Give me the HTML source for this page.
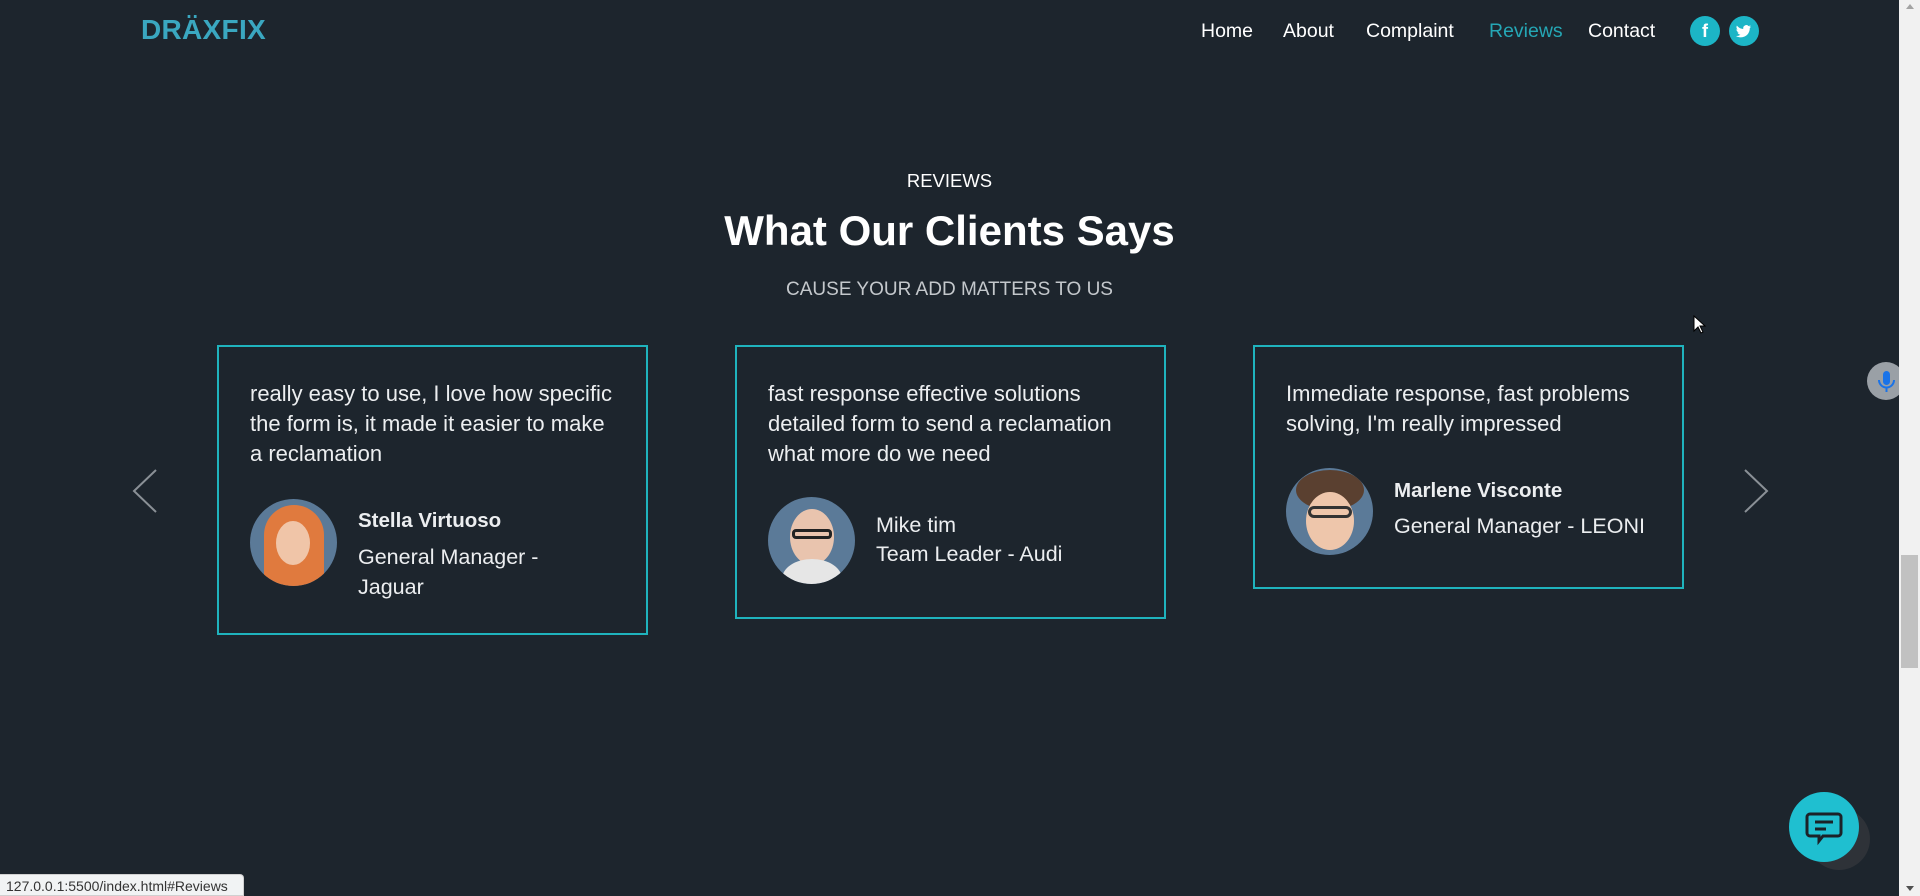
<!DOCTYPE html>
<html><head><meta charset="utf-8"><style>
*{margin:0;padding:0;box-sizing:border-box}
body{width:1920px;height:896px;overflow:hidden;background:#1d252d;font-family:"Liberation Sans",sans-serif;color:#fff;position:relative}
.a{position:absolute;white-space:nowrap}
.nav{top:20px;font-size:19.5px;color:#fff}
.card{position:absolute;top:345px;width:431px;border:2px solid #1fb3bd}
.q{position:absolute;left:31px;font-size:22px;line-height:30px;color:#eceef0}
.av{position:absolute;width:87px;height:87px;border-radius:50%;background:#5b7a98;overflow:hidden}
.nm{position:absolute;font-size:20.5px;font-weight:bold;color:#eceef0}
.rl{position:absolute;font-size:21.5px;line-height:30px;color:#eceef0}
</style></head><body>
<div class="a" style="left:141px;top:14px;font-size:28px;font-weight:bold;color:#3aa7c0;letter-spacing:0.3px">DRÄXFIX</div>
<div class="a nav" style="left:1201px">Home</div>
<div class="a nav" style="left:1283px">About</div>
<div class="a nav" style="left:1366px">Complaint</div>
<div class="a nav" style="left:1489px;color:#25a7b5">Reviews</div>
<div class="a nav" style="left:1588px">Contact</div>
<div class="a" style="left:1690px;top:16px;width:30px;height:30px;border-radius:50%;background:#1cb5c6;color:#fff;font-weight:bold;font-size:18px;text-align:center;line-height:31px">f</div>
<div class="a" style="left:1729px;top:16px;width:30px;height:30px;border-radius:50%;background:#1cb5c6">
<svg width="30" height="30" viewBox="0 0 30 30"><path d="M22 10.5c-.6.3-1.2.4-1.8.5.7-.4 1.1-1 1.4-1.7-.6.4-1.3.6-2 .8a3.1 3.1 0 0 0-5.300 2.8c-2.6-.1-4.900-1.400-6.400-3.300-.8 1.400-.4 3.200.9 4.100-.5 0-1-.2-1.400-.4 0 1.500 1.100 2.800 2.500 3.100-.5.1-.9.2-1.400.1.4 1.200 1.600 2.100 2.900 2.200A6.300 6.300 0 0 1 7 20c1.400.9 3 1.400 4.800 1.400 5.800 0 9-4.800 9-9v-.4c.6-.4 1.100-1 1.200-1.500z" fill="#fff"/></svg></div>

<div class="a" style="left:0;width:1899px;top:170px;text-align:center;font-size:18.5px">REVIEWS</div>
<div class="a" style="left:0;width:1899px;top:207px;text-align:center;font-size:42px;font-weight:bold;color:#fff">What Our Clients Says</div>
<div class="a" style="left:0;width:1899px;top:279px;text-align:center;font-size:19px;color:#c4c8cc">CAUSE YOUR ADD MATTERS TO US</div>

<svg class="a" style="left:130px;top:468px" width="30" height="46"><path d="M26 2 L4 23 L26 44" fill="none" stroke="#8a9096" stroke-width="2"/></svg>
<svg class="a" style="left:1741px;top:468px" width="30" height="46"><path d="M4 2 L26 23 L4 44" fill="none" stroke="#8a9096" stroke-width="2"/></svg>

<div class="card" style="left:217px;height:290px">
<div class="q" style="top:32px">really easy to use, I love how specific<br>the form is, it made it easier to make<br>a reclamation</div>
<div class="av" style="left:31px;top:152px"><div style="position:absolute;left:14px;top:6px;width:60px;height:90px;border-radius:30px 30px 0 0;background:#e07a3e"></div><div style="position:absolute;left:26px;top:22px;width:34px;height:44px;border-radius:50%;background:#f0c5a8"></div></div>
<div class="nm" style="left:139px;top:162px">Stella Virtuoso</div>
<div class="rl" style="left:139px;top:195px">General Manager -<br>Jaguar</div>
</div>

<div class="card" style="left:735px;height:274px">
<div class="q" style="top:32px">fast response effective solutions<br>detailed form to send a reclamation<br>what more do we need</div>
<div class="av" style="left:31px;top:150px"><div style="position:absolute;left:22px;top:12px;width:44px;height:56px;border-radius:50%;background:#e9c4ae"></div><div style="position:absolute;left:14px;top:62px;width:60px;height:40px;border-radius:50%;background:#e6e6e6"></div><div style="position:absolute;left:24px;top:32px;width:40px;height:10px;border:3px solid #222;border-radius:4px"></div></div>
<div class="nm" style="left:139px;top:166px;font-weight:normal;font-size:21.5px">Mike tim</div>
<div class="rl" style="left:139px;top:192px">Team Leader - Audi</div>
</div>

<div class="card" style="left:1253px;height:244px">
<div class="q" style="top:32px">Immediate response, fast problems<br>solving, I'm really impressed</div>
<div class="av" style="left:31px;top:121px"><div style="position:absolute;left:10px;top:2px;width:68px;height:40px;border-radius:50%;background:#5a4030"></div><div style="position:absolute;left:20px;top:24px;width:48px;height:58px;border-radius:50%;background:#eec6ab"></div><div style="position:absolute;left:22px;top:38px;width:44px;height:12px;border:3px solid #333;border-radius:6px"></div></div>
<div class="nm" style="left:139px;top:132px">Marlene Visconte</div>
<div class="rl" style="left:139px;top:164px">General Manager - LEONI</div>
</div>

<div class="a" style="left:1867px;top:362px;width:38px;height:38px;border-radius:50%;background:#9aa0a6"><svg width="38" height="38"><rect x="16" y="9" width="7" height="14" rx="3.5" fill="#1a73e8"/><path d="M12 18a7.5 7.5 0 0 0 15 0M19.5 26v4" stroke="#1a73e8" stroke-width="2" fill="none"/></svg></div>

<div class="a" style="left:1899px;top:0;width:21px;height:896px;background:#f1f1f1"></div>
<div class="a" style="left:1901px;top:555px;width:17px;height:113px;background:#c1c1c1"></div>
<div class="a" style="left:1906px;top:4px;width:0;height:0;border-left:4px solid transparent;border-right:4px solid transparent;border-bottom:5px solid #a3a3a3"></div>
<div class="a" style="left:1906px;top:886px;width:0;height:0;border-left:4px solid transparent;border-right:4px solid transparent;border-top:5px solid #505050"></div>

<div class="a" style="left:1808px;top:808px;width:62px;height:62px;border-radius:50%;background:#2e3238"></div>
<div class="a" style="left:1789px;top:792px;width:70px;height:70px;border-radius:50%;background:#1fbfd0"><svg width="70" height="70"><path d="M21 22h28a3 3 0 0 1 3 3v16a3 3 0 0 1-3 3H34l-4 5v-5h-9a3 3 0 0 1-3-3V25a3 3 0 0 1 3-3z" fill="none" stroke="#1b2228" stroke-width="3"/><path d="M26 30h18M26 37h11" stroke="#1b2228" stroke-width="3"/></svg></div>

<div class="a" style="left:0;top:874px;width:244px;height:22px;background:#f1f3f4;border:1px solid #d0d0d0;border-left:none;border-radius:0 4px 0 0;font-size:14px;color:#333;padding:3px 6px">127.0.0.1:5500/index.html#Reviews</div>
<svg class="a" style="left:1693px;top:315px" width="14" height="20"><path d="M1 1v15l4-4 3 6 2-1-3-6h5z" fill="#fff" stroke="#000"/></svg>
</body></html>
